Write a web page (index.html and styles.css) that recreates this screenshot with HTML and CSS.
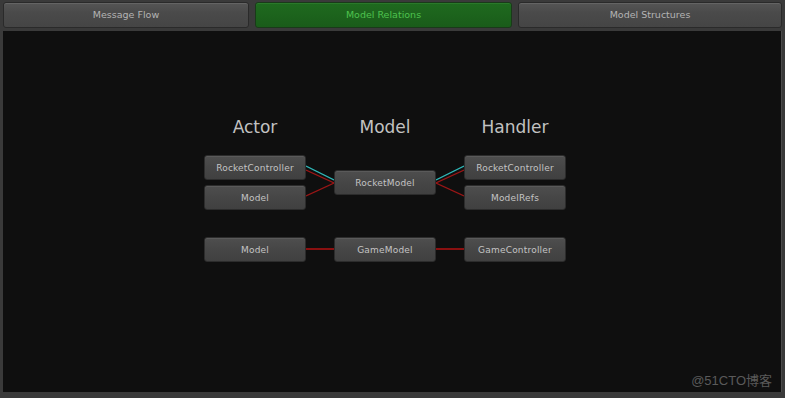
FILE: index.html
```html
<!DOCTYPE html>
<html>
<head>
<meta charset="utf-8">
<link rel="stylesheet" href="styles.css">
</head>
<body>
<div class="window">
  <div class="tabs">
    <div class="tab tab-1">Message Flow</div>
    <div class="tab tab-2 active">Model Relations</div>
    <div class="tab tab-3">Model Structures</div>
  </div>
  <div class="panel">
    <div class="diagram">
      <div class="heading">Actor</div>
      <div></div>
      <div class="heading">Model</div>
      <div></div>
      <div class="heading">Handler</div>

      <div class="stack">
        <div class="node">RocketController</div>
        <div class="node">Model</div>
      </div>
      <svg class="link" width="28" height="55" viewBox="0 0 28 55">
        <line x1="0" y1="11" x2="28" y2="25" stroke="#2fb8b8" stroke-width="1.2"/>
        <line x1="0" y1="15" x2="28" y2="28" stroke="#9a1616" stroke-width="1.2"/>
        <line x1="0" y1="41" x2="28" y2="28" stroke="#9a1616" stroke-width="1.2"/>
      </svg>
      <div class="stack center">
        <div class="node">RocketModel</div>
      </div>
      <svg class="link" width="28" height="55" viewBox="0 0 28 55">
        <line x1="0" y1="25" x2="28" y2="11" stroke="#2fb8b8" stroke-width="1.2"/>
        <line x1="0" y1="28" x2="28" y2="15" stroke="#9a1616" stroke-width="1.2"/>
        <line x1="0" y1="28" x2="28" y2="41" stroke="#9a1616" stroke-width="1.2"/>
      </svg>
      <div class="stack">
        <div class="node">RocketController</div>
        <div class="node">ModelRefs</div>
      </div>

      <div class="node row2">Model</div>
      <div class="hlink row2"></div>
      <div class="node row2">GameModel</div>
      <div class="hlink row2"></div>
      <div class="node row2">GameController</div>
    </div>
    <div class="watermark">@51CTO博客</div>
  </div>
</div>
</body>
</html>
```
FILE: styles.css
```css
html, body {
  margin: 0;
  padding: 0;
  background: #3a3a3a;
  width: 785px;
  height: 398px;
  overflow: hidden;
  font-family: "DejaVu Sans", Verdana, sans-serif;
}

.window {
  display: flex;
  flex-direction: column;
  padding: 2px 3px 0 3px;
  height: 396px;
  box-sizing: border-box;
}

.tabs {
  display: flex;
  gap: 6px;
  height: 26px;
}

.tab {
  box-sizing: border-box;
  height: 26px;
  padding-bottom: 2px;
  display: flex;
  align-items: center;
  justify-content: center;
  font-size: 9.5px;
  color: #b4b4b4;
  background: linear-gradient(#555 0%, #4a4a4a 40%, #454545 100%);
  border: 1px solid #2a2a2a;
  border-radius: 3px;
  box-shadow: inset 0 1px 0 #646464;
}

.tab-1 { width: 246px; }
.tab-2 { width: 257px; }
.tab-3 { width: 264px; }

.tab.active {
  background: linear-gradient(#1f6a1f 0%, #1a5c1a 100%);
  color: #4ec24e;
  border-color: #1a3a1a;
  box-shadow: inset 0 1px 0 #2a7a2a;
}

.panel {
  position: relative;
  margin-top: 3px;
  height: 361px;
  width: 779px;
  background: #0f0f0f;
  border-right: 1px solid #4a4a4a;
  box-sizing: border-box;
}

.diagram {
  display: grid;
  grid-template-columns: 102px 28px 102px 28px 102px;
  grid-template-rows: 20px 55px 25px;
  row-gap: 18px;
  padding-top: 86px;
  padding-left: 201px;
}

.diagram .row2 {
  margin-top: 9px;
}

.heading {
  font-size: 17px;
  line-height: 20px;
  color: #c2c2c2;
  text-align: center;
}

.stack {
  display: flex;
  flex-direction: column;
  gap: 5px;
}

.stack.center {
  justify-content: center;
}

.node {
  box-sizing: border-box;
  height: 25px;
  display: flex;
  align-items: center;
  justify-content: center;
  font-size: 9px;
  letter-spacing: 0.2px;
  color: #c4c4c4;
  background: linear-gradient(#4e4e4e 0%, #464646 50%, #404040 100%);
  border: 1px solid #2c2c2c;
  border-radius: 3px;
  box-shadow: inset 0 1px 0 #5a5a5a;
}

.link {
  display: block;
}

.hlink {
  height: 25px;
  display: flex;
  align-items: center;
}

.hlink::before {
  content: "";
  display: block;
  width: 100%;
  height: 2px;
  margin-top: -1px;
  background: #8a1010;
}

.watermark {
  position: absolute;
  right: 9px;
  bottom: 3px;
  font-family: "Liberation Sans", "Noto Sans CJK SC", sans-serif;
  font-size: 13px;
  color: #5a5a5a;
}
```
